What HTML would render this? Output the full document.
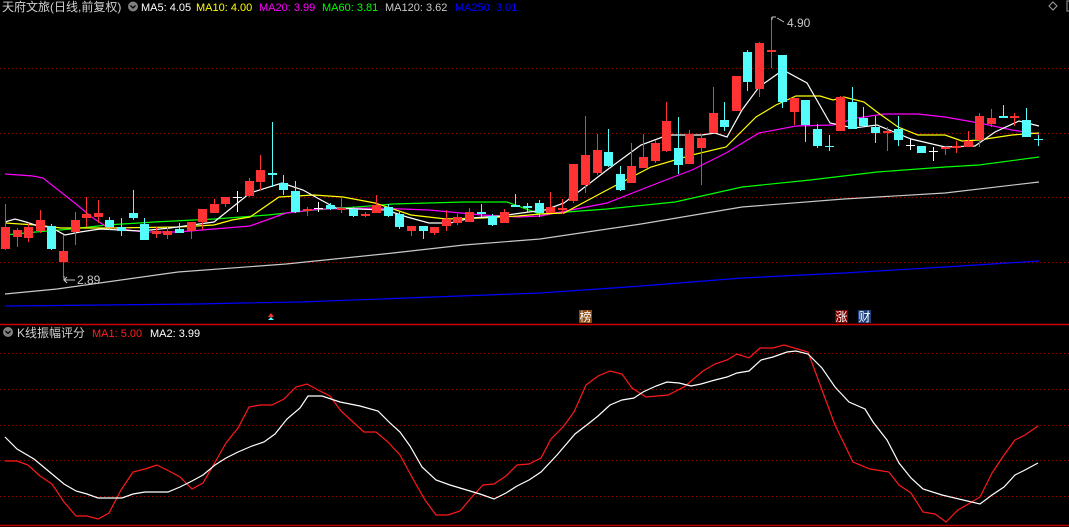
<!DOCTYPE html>
<html><head><meta charset="utf-8"><style>
html,body{margin:0;padding:0;background:#000;width:1069px;height:527px;overflow:hidden}
svg{display:block}
text{font-family:"Liberation Sans","Noto Sans CJK SC",sans-serif;font-size:12px}
.ma{font-size:11px}
</style></head><body>
<svg width="1069" height="527" viewBox="0 0 1069 527" xmlns="http://www.w3.org/2000/svg">
<rect width="1069" height="527" fill="#000"/>
<g stroke="#a00000" stroke-width="1" stroke-dasharray="1,3">
<path d="M0 68.5H1069M0 133.5H1069M0 197.5H1069M0 262.5H1069"/>
<path d="M0 353.5H1069M0 389.5H1069M0 425.5H1069M0 460.5H1069M0 496.5H1069"/>
</g>
<path d="M0 324.5H1069" stroke="#d00000" stroke-width="1.5"/>
<path d="M0 525.5H1069" stroke="#c00000" stroke-width="1.5"/>

<g fill="none" stroke-width="1.2">
<polyline stroke="#0000ff" points="5,306 57,305.5 197,304 243,303 300,302 540,293 641,286 742,278 844,273 945,267 1039,261"/>
<polyline stroke="#c8c8c8" points="5,294 57,289 178,272 286,264 393,253 464,245 540,239 641,224 742,207 844,199 945,193 1039,182"/>
<polyline stroke="#00ff00" points="5,235 36,232 71,229 107,225 154,222 214,219 268,215 314,210 357,207 393,204 464,202 507,202 540,214 607,209 675,202 742,187 810,180 877,172 945,167 979,165 1039,157"/>
<polyline stroke="#ff00ff" points="5,174 33,176 43,178 71,200 93,218 107,227 143,232 178,232 214,229 250,226 286,213 321,209 375,208 429,210 482,215 518,217 540,216 607,203 658,183 692,170 726,153 759,133 796,126 833,125 857,118 884,114 918,114 945,117 979,123 1012,130 1039,134"/>
<polyline stroke="#ffff00" points="5,223 36,225 61,228 107,228 178,227 214,225 232,220 250,217 279,197 314,195 343,197 375,203 411,215 446,219 482,218 518,216 540,214 564,213 607,190 651,167 692,155 726,147 756,117 776,105 796,96 820,96 833,100 844,97 864,102 877,112 898,127 918,135 945,135 962,141 979,140 1012,135 1039,133"/>
<polyline stroke="#ffffff" points="5,222 15,219 26,222 38,226 50,227 65,235 80,232 100,229 140,231 170,228 214,222 250,193 282,183 303,190 321,200 336,208 357,209 386,210 407,217 429,223 450,223 471,218 500,216 529,212 545,210 564,203 607,170 641,145 668,135 702,135 715,133 727,137 742,110 759,87 783,70 807,83 830,123 854,128 877,125 911,139 945,147 975,146 995,132 1019,121 1039,126"/>
</g>

<path stroke="#ff3333" stroke-width="1" fill="none" d="M5.5 204V250M17.5 228V247M28.5 223V242M40.5 210V233M63.5 235V277M75.5 212V245M86.5 197V227M98.5 200V223M156.5 227V238M167.5 227V239M191.5 222V239M202.5 209V230M214.5 199V213M225.5 197V207M249.5 178V197M260.5 155V190M307.5 207V216M341.5 197V213M365.5 212V217M376.5 195V213M411.5 226V236M434.5 227V235M446.5 210V231M457.5 214V225M469.5 208V222M504.5 209V223M550.5 192V213M562.5 199V214M573.5 164V203M585.5 116V193M597.5 134V175M631.5 143V183M643.5 134V168M655.5 140V163M666.5 102V152M689.5 130V164M701.5 134V185M713.5 87V133M736.5 76V111M759.5 42V97M771.5 17V68M794.5 98V125M840.5 96V131M887.5 127V151M945.5 147V155M956.5 141V153M968.5 131V147M979.5 113V147M991.5 109V127M1014.5 113V126"/>
<path stroke="#54fcfc" stroke-width="1" fill="none" d="M51.5 224V250M109.5 217V230M121.5 218V236M133.5 190V220M144.5 218V240M179.5 223V233M272.5 122V187M283.5 175V195M295.5 181V213M330.5 203V210M353.5 207V217M388.5 204V217M399.5 212V229M423.5 226V239M481.5 204V217M492.5 214V226M515.5 194V207M527.5 203V212M539.5 200V217M608.5 129V167M620.5 166V191M678.5 117V174M724.5 102V131M747.5 50V91M782.5 55V108M805.5 100V142M817.5 124V148M829.5 135V151M852.5 87V129M863.5 107V126M875.5 116V143M898.5 116V146M921.5 146V153M1003.5 105V117M1026.5 108V137M1038.5 135V146"/>
<path stroke="#ffffff" stroke-width="1" fill="none" d="M237.5 191V212M233 197.5H242M318.5 202V212M314 208.5H323M910.5 139V150M906 145.5H915M933.5 147V161M929 151.5H938"/>
<path stroke="#54fcfc" stroke-width="1" fill="none" d="M825 146.5H834M1034 139.5H1043"/>

<g fill="#ff3333">
<rect x="1" y="227" width="9" height="22"/><rect x="13" y="230" width="9" height="7"/><rect x="24" y="227" width="9" height="11"/><rect x="36" y="220" width="9" height="11"/><rect x="59" y="251" width="9" height="11"/><rect x="71" y="220" width="9" height="12"/><rect x="82" y="214" width="9" height="4"/><rect x="94" y="213" width="9" height="4"/><rect x="152" y="231" width="9" height="3"/><rect x="163" y="231" width="9" height="4"/><rect x="187" y="222" width="9" height="9"/><rect x="198" y="209" width="9" height="13"/><rect x="210" y="204" width="9" height="9"/><rect x="221" y="197" width="9" height="7"/><rect x="245" y="181" width="9" height="15"/><rect x="256" y="170" width="9" height="12"/><rect x="303" y="209" width="9" height="2"/><rect x="337" y="208" width="9" height="2"/><rect x="361" y="214" width="9" height="2"/><rect x="372" y="205" width="9" height="8"/><rect x="407" y="226" width="9" height="5"/><rect x="430" y="227" width="9" height="6"/><rect x="442" y="219" width="9" height="7"/><rect x="453" y="217" width="9" height="6"/><rect x="465" y="212" width="9" height="10"/><rect x="500" y="212" width="9" height="11"/><rect x="546" y="207" width="9" height="6"/><rect x="558" y="208" width="9" height="2"/><rect x="569" y="164" width="9" height="37"/><rect x="581" y="155" width="9" height="30"/><rect x="593" y="150" width="9" height="23"/><rect x="627" y="166" width="9" height="17"/><rect x="639" y="157" width="9" height="11"/><rect x="651" y="143" width="9" height="18"/><rect x="662" y="121" width="9" height="30"/><rect x="685" y="134" width="9" height="30"/><rect x="697" y="138" width="9" height="10"/><rect x="709" y="113" width="9" height="20"/><rect x="732" y="76" width="9" height="35"/><rect x="755" y="43" width="9" height="46"/><rect x="767" y="50" width="9" height="2"/><rect x="790" y="98" width="9" height="14"/><rect x="836" y="97" width="9" height="34"/><rect x="883" y="131" width="9" height="2"/><rect x="941" y="147" width="9" height="2"/><rect x="952" y="146" width="9" height="2"/><rect x="964" y="141" width="9" height="6"/><rect x="975" y="116" width="9" height="24"/><rect x="987" y="118" width="9" height="6"/><rect x="1010" y="116" width="9" height="2"/>
</g>
<g fill="#54fcfc">
<rect x="47" y="226" width="9" height="23"/><rect x="105" y="220" width="9" height="7"/><rect x="117" y="227" width="9" height="4"/><rect x="129" y="213" width="9" height="5"/><rect x="140" y="224" width="9" height="16"/><rect x="175" y="229" width="9" height="4"/><rect x="268" y="173" width="9" height="2"/><rect x="279" y="183" width="9" height="7"/><rect x="291" y="191" width="9" height="21"/><rect x="326" y="205" width="9" height="4"/><rect x="349" y="209" width="9" height="7"/><rect x="384" y="207" width="9" height="9"/><rect x="395" y="214" width="9" height="13"/><rect x="419" y="226" width="9" height="5"/><rect x="477" y="212" width="9" height="2"/><rect x="488" y="216" width="9" height="9"/><rect x="511" y="205" width="9" height="2"/><rect x="523" y="206" width="9" height="2"/><rect x="535" y="203" width="9" height="10"/><rect x="604" y="152" width="9" height="14"/><rect x="616" y="174" width="9" height="16"/><rect x="674" y="148" width="9" height="17"/><rect x="720" y="120" width="9" height="7"/><rect x="743" y="52" width="9" height="30"/><rect x="778" y="55" width="9" height="47"/><rect x="801" y="100" width="9" height="25"/><rect x="813" y="129" width="9" height="17"/><rect x="848" y="102" width="9" height="27"/><rect x="859" y="118" width="9" height="8"/><rect x="871" y="127" width="9" height="6"/><rect x="894" y="129" width="9" height="11"/><rect x="917" y="146" width="9" height="7"/><rect x="999" y="116" width="9" height="2"/><rect x="1022" y="120" width="9" height="17"/>
</g>

<path d="M772 17 L776 17 M772 17 L772 20 M777 18 L784 22" stroke="#c8c8c8" stroke-width="1" fill="none"/>
<text x="787" y="27" fill="#c8c8c8" font-size="12">4.90</text>
<path d="M64 276 L64 280 L75 280 M64 280 L67 277 M64 280 L67 283" stroke="#c8c8c8" stroke-width="1" fill="none"/>
<text x="77" y="284" fill="#c8c8c8" font-size="12">2.89</text>

<path d="M268 317 L271 313 L274 317Z" fill="#ff3030"/>
<path d="M268 320 L271 317 L274 320Z" fill="#54fcfc"/>
<rect x="579" y="310" width="13" height="13" fill="#8b4a10"/>
<text x="579.5" y="321" fill="#fff" font-size="11">榜</text>
<rect x="835" y="310" width="13" height="13" fill="#7a0000"/>
<text x="835.5" y="321" fill="#fff" font-size="11">涨</text>
<rect x="858" y="310" width="13" height="13" fill="#1a3f7a"/>
<text x="858.5" y="321" fill="#fff" font-size="11">财</text>

<text x="2" y="11" fill="#d0d0d0">天府文旅(日线,前复权)</text>
<circle cx="133" cy="6.5" r="5" fill="#808080"/>
<path d="M130.5 5.5 L133 8 L135.5 5.5" stroke="#000" stroke-width="1.3" fill="none"/>
<text class="ma" x="141" y="11" fill="#ffffff">MA5: 4.05</text>
<text class="ma" x="196" y="11" fill="#ffff00">MA10: 4.00</text>
<text class="ma" x="259" y="11" fill="#ff00ff">MA20: 3.99</text>
<text class="ma" x="322" y="11" fill="#00ff00">MA60: 3.81</text>
<text class="ma" x="385" y="11" fill="#c8c8c8">MA120: 3.62</text>
<text class="ma" x="455" y="11" fill="#0000ff">MA250: 3.01</text>
<path d="M1053 2 L1057 6 L1053 10 L1049 6Z" stroke="#a0a0a0" fill="none"/>
<path d="M1069 1 L1067 1 L1067 11 L1069 11" stroke="#a0a0a0" fill="none"/>

<circle cx="8" cy="332" r="5" fill="#808080"/>
<path d="M5.5 331 L8 333.5 L10.5 331" stroke="#000" stroke-width="1.3" fill="none"/>
<text x="17" y="337" fill="#d0d0d0">K线振幅评分</text>
<text class="ma" x="92" y="337" fill="#ff2020">MA1: 5.00</text>
<text class="ma" x="150" y="337" fill="#ffffff">MA2: 3.99</text>

<g fill="none" stroke-width="1.2">
<polyline stroke="#ff1a1a" points="5,461 17,461 28,465 40,476 52,484 64,502 76,516 87,516 98,519 109,513 121,490 133,472 145,469 157,465 169,471 180,477 192,489 203,483 214,464 226,443 238,428 249,407 260,405 272,405 284,399 296,387 307,384 318,390 330,396 341,411 353,422 364,432 376,432 388,442 400,455 413,479 425,500 436,515 448,515 460,511 471,498 483,485 494,484 506,476 517,465 529,464 541,458 551,439 563,427 574,412 586,385 598,376 610,371 622,374 632,388 646,397 668,395 684,387 703,371 715,364 727,360 737,354 749,358 760,348 773,348 784,345 808,352 822,390 835,425 853,462 870,469 889,472 899,485 911,493 923,512 935,514 946,522 958,510 970,503 980,497 992,473 1004,455 1015,440 1025,435 1038,426"/>
<polyline stroke="#ffffff" points="5,437 17,449 34,459 52,474 64,484 76,491 87,494 98,498 110,498 122,498 133,494 145,492 168,492 180,487 192,481 203,475 215,465 226,458 238,452 252,446 264,442 275,434 287,419 300,408 308,396 322,396 340,402 360,406 378,411 390,423 400,432 410,446 422,467 436,480 450,485 470,491 480,494 494,499 506,493 517,486 529,480 541,472 557,455 575,434 588,424 598,416 610,405 622,400 634,398 643,392 656,386 667,382 679,383 691,386 701,384 715,380 727,377 737,373 749,371 761,360 773,357 787,352 796,351 808,354 822,368 835,387 849,402 865,409 873,422 887,440 899,463 911,478 923,489 942,495 980,504 992,495 1004,487 1015,475 1025,470 1038,463"/>
</g>
</svg>
</body></html>
